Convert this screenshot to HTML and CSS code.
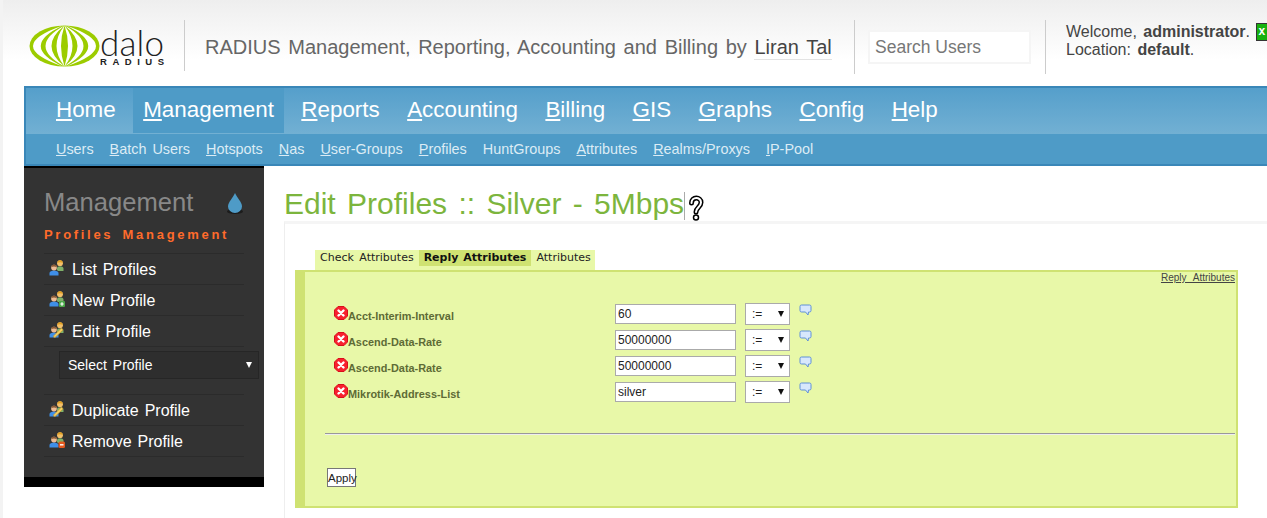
FILE: index.html
```html
<!DOCTYPE html>
<html lang="en">
<head>
<meta charset="utf-8">
<title>daloRADIUS</title>
<link rel="stylesheet" href="styles.css">
</head>
<body>
<svg class="defs" width="0" height="0" aria-hidden="true">
  <defs>
    <symbol id="people" viewBox="0 0 16 16">
      <path d="M8 10V8.500C8 7 9.300 6.300 11 6.300S14.500 7 14.500 8.500V11H9z" fill="#7fb069"/>
      <circle cx="11" cy="3.200" r="2.900" fill="#f3c06c"/>
      <path d="M8.200 3C8.500.8 10 .2 11 .2s2.600.6 2.800 2.800C12.500 1.900 9.500 1.900 8.200 3z" fill="#e2a021"/>
      <path d="M.5 15.500V13C.5 11.300 2.700 10.400 5 10.400s4.500.9 4.500 2.600v2.500z" fill="#3f8fe8"/>
      <circle cx="5" cy="7.600" r="2.900" fill="#edbb94"/>
      <path d="M2.200 7.400C2.400 5.200 3.900 4.600 5 4.600s2.600.6 2.800 2.800C6.500 6.300 3.500 6.300 2.200 7.400z" fill="#8a5a35"/>
    </symbol>
    <symbol id="people-add" viewBox="0 0 16 16">
      <use href="#people" width="16" height="16"/>
      <rect x="10" y="10" width="6" height="6" rx="1" fill="#4aa84a"/>
      <path d="M13 11.300v3.400M11.300 13h3.400" stroke="#fff" stroke-width="1.200"/>
    </symbol>
    <symbol id="people-edit" viewBox="0 0 16 16">
      <use href="#people" width="16" height="16"/>
      <path d="M6 15.500l-1.500-.5.500-1.500 7.500-7.500 1.500 2z" fill="#f5d264" stroke="#c9962a" stroke-width=".7"/>
    </symbol>
    <symbol id="people-del" viewBox="0 0 16 16">
      <use href="#people" width="16" height="16"/>
      <rect x="9.500" y="9.500" width="6.500" height="6.500" rx="1.500" fill="#e2581e"/>
      <path d="M11 12.800h3.500" stroke="#fff" stroke-width="1.400"/>
    </symbol>
    <symbol id="cross" viewBox="0 0 14 14">
      <path d="M4 .5h6L13.500 4v6L10 13.500H4L.5 10V4z" fill="#f8202e" stroke="#d80f1c"/>
      <path d="M4.500 4.500l5 5m0-5l-5 5" stroke="#fff" stroke-width="2.400" stroke-linecap="round"/>
    </symbol>
    <symbol id="bubble" viewBox="0 0 13 13">
      <path d="M2.500 1h8A1.500 1.500 0 0 1 12 2.500v4A1.500 1.500 0 0 1 10.500 8H9.500L9 11 6.500 8h-4A1.500 1.500 0 0 1 1 6.500v-4A1.500 1.500 0 0 1 2.500 1z" fill="#d8e8fc" stroke="#5f90d8"/>
    </symbol>
  </defs>
</svg>

<header class="top">
  <div class="logo">
    <svg class="logomark" width="136" height="42" viewBox="0 0 136 42">
      <ellipse cx="35.500" cy="21" rx="35" ry="20.500" fill="#9ccc00"/>
      <g fill="#fff">
        <path d="M35.500 .5Q42.500 21 35.500 41.500Q51.500 21 35.500 .5z"/>
        <path d="M35.500 .5Q61.500 21 35.500 41.500Q73.500 21 35.500 .5z"/>
        <path d="M37 .5Q81.500 21 37 41.500Q97 21 37 .5z"/>
        <path d="M35.500 .5Q28.500 21 35.500 41.500Q19.500 21 35.500 .5z"/>
        <path d="M35.500 .5Q9.500 21 35.500 41.500Q-2.500 21 35.500 .5z"/>
        <path d="M34 .5Q-10.500 21 34 41.500Q-26 21 34 .5z"/>
      </g>
      <text class="dalo" x="71" y="31" textLength="64">dalo</text>
      <text class="radius" x="71" y="39.500" textLength="64">RADIUS</text>
    </svg>
  </div>
  <div class="tagline">RADIUS Management, Reporting, Accounting and Billing by <span class="author">Liran Tal</span></div>
  <div class="searchcell"><input class="search" type="text" placeholder="Search Users"></div>
  <div class="welcome">
    <div>Welcome, <b>administrator</b>. <span class="logout">x</span></div>
    <div>Location: <b>default</b>.</div>
  </div>
</header>

<nav class="nav">
  <ul class="mainnav">
    <li><a href="#"><u>H</u>ome</a></li>
    <li class="on"><a href="#"><u>M</u>anagement</a></li>
    <li><a href="#"><u>R</u>eports</a></li>
    <li><a href="#"><u>A</u>ccounting</a></li>
    <li><a href="#"><u>B</u>illing</a></li>
    <li><a href="#"><u>G</u>IS</a></li>
    <li><a href="#"><u>G</u>raphs</a></li>
    <li><a href="#"><u>C</u>onfig</a></li>
    <li><a href="#"><u>H</u>elp</a></li>
  </ul>
  <ul class="subnav">
    <li><a href="#"><u>U</u>sers</a></li>
    <li><a href="#"><u>B</u>atch Users</a></li>
    <li><a href="#"><u>H</u>otspots</a></li>
    <li><a href="#"><u>N</u>as</a></li>
    <li><a href="#"><u>U</u>ser-Groups</a></li>
    <li><a href="#"><u>P</u>rofiles</a></li>
    <li><a href="#">HuntGroups</a></li>
    <li><a href="#"><u>A</u>ttributes</a></li>
    <li><a href="#"><u>R</u>ealms/Proxys</a></li>
    <li><a href="#"><u>I</u>P-Pool</a></li>
  </ul>
</nav>

<div class="page">
  <aside class="side">
    <div class="sidehead">
      <h2>Management</h2>
      <svg class="drop" width="18" height="22" viewBox="0 0 18 22">
        <ellipse cx="9" cy="19.500" rx="8" ry="2.500" fill="#1c1c1c"/>
        <path d="M9 1C11 6 16 10 16 14.500A7 6.500 0 0 1 2 14.500C2 10 7 6 9 1z" fill="#4e9bc7"/>
      </svg>
    </div>
    <h3>Profiles Management</h3>
    <ul class="menu">
      <li><svg class="pi" width="16" height="16"><use href="#people"/></svg>List Profiles</li>
      <li><svg class="pi" width="16" height="16"><use href="#people-add"/></svg>New Profile</li>
      <li><svg class="pi" width="16" height="16"><use href="#people-edit"/></svg>Edit Profile</li>
      <li class="selrow"><div class="selwrap"><select class="profsel"><option>Select Profile</option></select></div></li>
      <li><svg class="pi" width="16" height="16"><use href="#people-edit"/></svg>Duplicate Profile</li>
      <li><svg class="pi" width="16" height="16"><use href="#people-del"/></svg>Remove Profile</li>
    </ul>
    <div class="sidefoot"></div>
  </aside>

  <main class="main">
    <h1>Edit Profiles :: Silver - 5Mbps<span class="caret"></span><svg class="help" width="16" height="26" viewBox="0 0 16 26"><path d="M3.500 8C3.500 1.500 13 1.500 13 7.500C13 12 8 12.500 8 17" fill="none" stroke="#000" stroke-width="5" stroke-linecap="round"/><path d="M3.500 8C3.500 1.500 13 1.500 13 7.500C13 12 8 12.500 8 17" fill="none" stroke="#fff" stroke-width="2" stroke-linecap="round"/><circle cx="8" cy="22.500" r="2.500" fill="#fff" stroke="#000" stroke-width="1.500"/></svg></h1>
    <div class="box">
      <ul class="tabs">
        <li>Check Attributes</li>
        <li class="active">Reply Attributes</li>
        <li>Attributes</li>
      </ul>
      <section class="panel">
        <div class="panelcap"><a href="#">Reply Attributes</a></div>
        <div class="rows">
          <div class="row">
            <div class="lab"><svg class="x" width="14" height="14"><use href="#cross"/></svg><span>Acct-Interim-Interval</span></div>
            <input class="val" type="text" value="60">
            <div class="opwrap"><select class="op"><option>:=</option></select></div>
            <svg class="note" width="13" height="13"><use href="#bubble"/></svg>
          </div>
          <div class="row">
            <div class="lab"><svg class="x" width="14" height="14"><use href="#cross"/></svg><span>Ascend-Data-Rate</span></div>
            <input class="val" type="text" value="50000000">
            <div class="opwrap"><select class="op"><option>:=</option></select></div>
            <svg class="note" width="13" height="13"><use href="#bubble"/></svg>
          </div>
          <div class="row">
            <div class="lab"><svg class="x" width="14" height="14"><use href="#cross"/></svg><span>Ascend-Data-Rate</span></div>
            <input class="val" type="text" value="50000000">
            <div class="opwrap"><select class="op"><option>:=</option></select></div>
            <svg class="note" width="13" height="13"><use href="#bubble"/></svg>
          </div>
          <div class="row">
            <div class="lab"><svg class="x" width="14" height="14"><use href="#cross"/></svg><span>Mikrotik-Address-List</span></div>
            <input class="val" type="text" value="silver">
            <div class="opwrap"><select class="op"><option>:=</option></select></div>
            <svg class="note" width="13" height="13"><use href="#bubble"/></svg>
          </div>
        </div>
        <hr class="rule">
        <button class="apply" type="button">Apply</button>
      </section>
    </div>
  </main>
</div>
</body>
</html>
```

FILE: styles.css
```css
* { box-sizing: border-box; }
html, body { height: 518px; overflow: hidden; }
body {
  margin: 0;
  padding-left: 21px;
  border-left: 3px solid #f3f3f3;
  font-family: "Liberation Sans", Arial, sans-serif;
  background: #fff;
  color: #333;
  word-spacing: 2px;
  width: 1267px;
}
.defs { display: block; height: 0; }
ul { list-style: none; margin: 0; padding: 0; }
a { color: inherit; text-decoration: none; }

.top {
  margin-left: -21px;
  padding: 20px 0 12px 26px;
  height: 86px;
  display: flex;
  align-items: stretch;
  background: linear-gradient(#eeeeee, #ffffff 60px);
  white-space: nowrap;
}
.logo {
  flex: none;
  width: 155px;
  padding-top: 5px;
}
.logomark { display: block; overflow: visible; }
.dalo { font-family: Lato, "Liberation Sans", sans-serif; font-weight: 300; font-size: 35px; fill: #222; word-spacing: 0; }
.radius { font-family: "Liberation Sans", Arial, sans-serif; font-size: 9.500px; font-weight: 700; fill: #222; word-spacing: 0; }
.tagline {
  flex: none;
  width: 670px;
  border-left: 1px solid #ccc;
  padding-left: 20px;
  height: 51px;
  font-size: 20px;
  line-height: 54px;
  color: #666;
  word-spacing: 2.100px;
}
.author { color: #444; border-bottom: 1px solid #e3e3e3; padding-bottom: 1px; }
.searchcell {
  flex: none;
  width: 191px;
  height: 54px;
  border-left: 1px solid #ccc;
  padding: 10px 0 0 13px;
}
.search {
  display: block;
  width: 163px;
  height: 34px;
  border: 2px solid #f5f5f5;
  background: #fff;
  padding: 0 5px;
  font: 17.500px "Liberation Sans", Arial, sans-serif;
  color: #777;
}
.search::placeholder { color: #777; opacity: 1; }
.welcome {
  flex: none;
  height: 54px;
  border-left: 1px solid #ccc;
  padding: 3px 0 0 20px;
  font-size: 16px;
  line-height: 18px;
  color: #444;
}
.logout {
  display: inline-block;
  width: 16px;
  height: 18px;
  background: #17b10f;
  border: 1px solid #333;
  color: #fff;
  font-size: 12px;
  font-weight: 700;
  line-height: 14px;
  padding-left: 1px;
  vertical-align: top;
}

.nav {
  border-top: 2px solid #3a87b8;
  border-bottom: 2px solid #3a87b8;
  border-left: 2px solid #3a87b8;
  color: #fff;
}
.mainnav {
  height: 46px;
  display: flex;
  gap: 27.450px;
  padding-left: 30px;
  background: linear-gradient(#559fcb, #72b0d3);
}
.mainnav li { height: 45px; font-size: 22.400px; line-height: 44px; word-spacing: 0; }
.mainnav .on { padding: 0 10.500px; margin: 0 -10.500px; background: #4e9bc7; }
.subnav {
  height: 30px;
  display: flex;
  gap: 16px;
  padding-left: 30px;
  background: #4e9bc7;
  font-size: 14.400px;
  line-height: 30px;
  color: #dcecf5;
  word-spacing: 2px;
}

.page { display: flex; align-items: flex-start; }
.side {
  flex: none;
  width: 240px;
  height: 321px;
  background: #333;
  border-top: 2px solid #000;
  color: #fff;
  display: flex;
  flex-direction: column;
}
.sidehead {
  display: flex;
  justify-content: space-between;
  padding: 19px 20px 0 20px;
  height: 53px;
}
.side h2 { margin: 0; font-size: 25.600px; font-weight: 400; line-height: 30px; color: #888; word-spacing: 0; }
.drop { margin-top: 5px; }
.side h3 {
  margin: 0 20px;
  font-size: 13px;
  line-height: 16px;
  color: #ff6b2b;
  letter-spacing: 2.700px;
  word-spacing: 3px;
  height: 32px;
  padding-top: 6px;
  white-space: nowrap;
}
.menu { margin: 0 20px; flex: 1; }
.menu li {
  height: 31px;
  border-top: 1px solid #2b2b2b;
  padding-top: 2px;
  font-size: 16px;
  line-height: 30px;
  display: flex;
  align-items: center;
  word-spacing: 1.500px;
  white-space: nowrap;
}
.menu li:last-child { border-bottom: 1px solid #2b2b2b; height: 32px; }
.menu .selrow { height: 48px; align-items: flex-start; padding-top: 4px; }
.pi { margin: -5px 7px 0 5px; flex: none; }
.selwrap { position: relative; margin-left: 15px; width: 200px; height: 28px; flex: none; }
.selwrap::after {
  content: "";
  position: absolute;
  right: 7px;
  top: 11px;
  border-style: solid;
  border-width: 6px 3px 0;
  border-color: #fff transparent transparent;
  pointer-events: none;
}
.profsel {
  display: block;
  appearance: none;
  -webkit-appearance: none;
  width: 200px;
  height: 28px;
  background: #2e2e2e;
  border: 1px solid #262626;
  border-radius: 0;
  color: #fff;
  padding: 0 8px;
  font: 14px "Liberation Sans", Arial, sans-serif;
  word-spacing: 2px;
}
.sidefoot { height: 10px; background: #000; }

.main { flex: 1; min-width: 0; padding: 0 0 0 20px; }
.main h1 {
  margin: 0;
  height: 55px;
  padding-top: 20px;
  font-size: 30px;
  font-weight: 400;
  line-height: 36px;
  color: #7cb53d;
  word-spacing: 3px;
  white-space: nowrap;
}
.caret { display: inline-block; width: 1px; height: 28px; background: #aaa; vertical-align: -6px; }
.help { margin-left: 3px; vertical-align: -7px; }
.box {
  border-top: 3px solid #f5f5f5;
  border-left: 1px solid #eee;
  padding: 26px 0 0 10px;
  height: 300px;
}
.tabs {
  display: flex;
  width: 280px;
  height: 20px;
  margin-left: 20px;
  background: #e8f8a8;
  font-family: "DejaVu Sans", Verdana, sans-serif;
  font-size: 11px;
  line-height: 15px;
  color: #222;
  word-spacing: 2px;
}
.tabs li { padding: 0 5px; height: 16px; white-space: nowrap; }
.tabs .active { background: #cfe272; font-weight: 700; color: #111; word-spacing: 1px; }
.panel {
  width: 943px;
  height: 238px;
  background: #e8f8a8;
  border: 2px solid #cfe272;
  border-left-width: 10px;
  display: flex;
  flex-direction: column;
}
.panelcap { text-align: right; padding-right: 1px; font-size: 10px; line-height: 12px; height: 31px; color: #444; word-spacing: 4px; }
.panelcap a { text-decoration: underline; }
.rows { display: flex; flex-direction: column; gap: 4px; padding-left: 28px; }
.row { height: 22px; display: flex; align-items: center; }
.lab { width: 282px; padding-left: 1px; display: flex; align-items: flex-start; font-size: 10.900px; font-weight: 700; color: #5e6b36; word-spacing: 0; }
.lab span { margin-top: 4px; }
.x { flex: none; }
.val {
  width: 121px;
  height: 20px;
  border: 1px solid #aaa;
  background: #fff;
  padding: 0 2px;
  font: 12px "Liberation Sans", Arial, sans-serif;
  color: #222;
}
.opwrap { position: relative; width: 45px; height: 22px; margin-left: 9px; flex: none; }
.opwrap::after {
  content: "";
  position: absolute;
  right: 6px;
  top: 8px;
  border-style: solid;
  border-width: 6px 3.500px 0;
  border-color: #111 transparent transparent;
  pointer-events: none;
}
.op {
  display: block;
  appearance: none;
  -webkit-appearance: none;
  width: 45px;
  height: 22px;
  border: 1px solid #aaa;
  border-radius: 0;
  background: #fff;
  font: 12px "Liberation Sans", Arial, sans-serif;
  color: #222;
  padding: 0 6px;
}
.note { margin: -8px 0 0 9px; }
.rule {
  width: 910px;
  margin: 30px 0 0 20px;
  height: 2px;
  border: 0;
  border-top: 1px solid #999;
  background: #eee;
}
.apply {
  align-self: flex-start;
  width: 29px;
  height: 19px;
  margin: 33px 0 0 22px;
  padding: 0;
  border: 1px solid #777;
  background: #fff;
  font: 11.500px "Liberation Sans", Arial, sans-serif;
  color: #222;
}
```
